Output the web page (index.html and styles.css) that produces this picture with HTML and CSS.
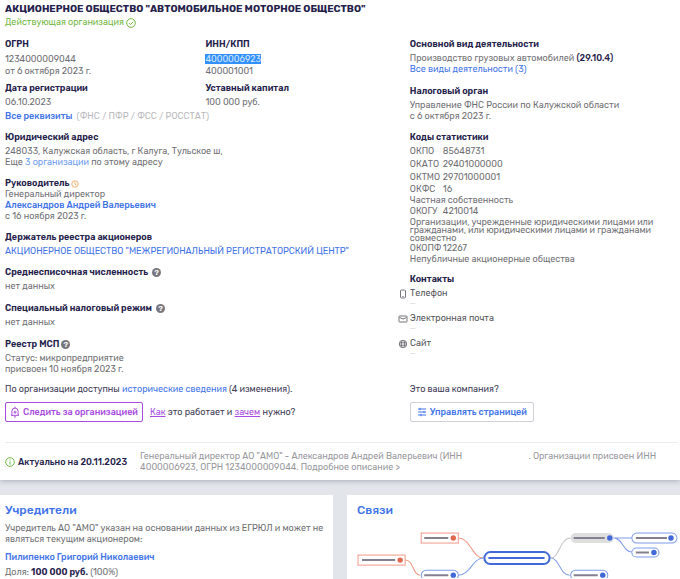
FILE: index.html
```html
<!DOCTYPE html>
<html lang="ru">
<head>
    <meta charset="UTF-8">
    <meta name="viewport" content="width=device-width, initial-scale=1.0">
    <title>АО "АМО"</title>
    <link rel="stylesheet" href="styles.css">
</head>
<body>
    <main class="company">
        <h1>АКЦИОНЕРНОЕ ОБЩЕСТВО "АВТОМОБИЛЬНОЕ МОТОРНОЕ ОБЩЕСТВО"</h1>
        <p class="status">Действующая организация
            <svg class="icon" viewBox="0 0 10 10"><circle cx="5" cy="5" r="4.3"/><path d="M3 5.1l1.5 1.5L7.2 3.7"/></svg>
        </p>

        <div class="columns">
            <div class="left">
                <div class="pair">
                    <section class="block">
                        <h2>ОГРН</h2>
                        <p>1234000009044</p>
                        <p>от 6 октября 2023 г.</p>
                    </section>
                    <section class="block">
                        <h2>ИНН/КПП</h2>
                        <p><mark>4000006923</mark></p>
                        <p>400001001</p>
                    </section>
                    <section>
                        <h2>Дата регистрации</h2>
                        <p>06.10.2023</p>
                    </section>
                    <section>
                        <h2>Уставный капитал</h2>
                        <p>100 000 руб.</p>
                    </section>
                </div>
                <p class="details"><a class="medium" href="#">Все реквизиты</a> <span class="muted">(ФНС / ПФР / ФСС / РОССТАТ)</span></p>

                <section class="block">
                    <h2>Юридический адрес</h2>
                    <p>248033, Калужская область, г Калуга, Тульское ш,</p>
                    <p>Еще <a class="light" href="#">3 организации</a> по этому адресу</p>
                </section>
                <section class="block tight">
                    <h2>Руководитель
                        <svg class="icon clock" viewBox="0 0 10 10"><circle cx="5" cy="5" r="4"/><path d="M5 2.5v2.7l1.8 1"/></svg>
                    </h2>
                    <p>Генеральный директор</p>
                    <p><a class="medium" href="#">Александров Андрей Валерьевич</a></p>
                    <p>с 16 ноября 2023 г.</p>
                </section>
                <section class="block">
                    <h2>Держатель реестра акционеров</h2>
                    <p><a href="#">АКЦИОНЕРНОЕ ОБЩЕСТВО "МЕЖРЕГИОНАЛЬНЫЙ РЕГИСТРАТОРСКИЙ ЦЕНТР"</a></p>
                </section>
                <section class="block wide">
                    <h2>Среднесписочная численность <span class="hint">?</span></h2>
                    <p>нет данных</p>
                </section>
                <section class="block wide">
                    <h2>Специальный налоговый режим <span class="hint">?</span></h2>
                    <p>нет данных</p>
                </section>
                <section>
                    <h2>Реестр МСП<span class="hint">?</span></h2>
                    <p>Статус: микропредприятие</p>
                    <p>присвоен 10 ноября 2023 г.</p>
                </section>
            </div>

            <div class="right">
                <section class="block wide">
                    <h2>Основной вид деятельности</h2>
                    <p>Производство грузовых автомобилей <b class="medium">(29.10.4)</b></p>
                    <p><a href="#">Все виды деятельности (3)</a></p>
                </section>
                <section class="block">
                    <h2>Налоговый орган</h2>
                    <p>Управление ФНС России по Калужской области</p>
                    <p>с 6 октября 2023 г.</p>
                </section>
                <section class="codes">
                    <h2>Коды статистики</h2>
                    <p class="code"><span>ОКПО</span>85648731</p>
                    <p class="code"><span>ОКАТО</span>29401000000</p>
                    <p class="code"><span>ОКТМО</span>29701000001</p>
                    <p><span>ОКФС</span>16</p>
                    <p>Частная собственность</p>
                    <p><span>ОКОГУ</span>4210014</p>
                    <p class="dense">Организации, учрежденные юридическими лицами или гражданами, или юридическими лицами и гражданами совместно</p>
                    <p><span>ОКОПФ</span>12267</p>
                    <p>Непубличные акционерные общества</p>
                </section>
                <section>
                    <h2>Контакты</h2>
                    <ul class="contacts">
                        <li>
                            <svg class="icon" viewBox="0 0 10 10"><rect x="2.5" y="1" width="5" height="8" rx="1"/><path d="M4.3 7.6h1.4"/></svg>
                            Телефон <span class="empty">—</span>
                        </li>
                        <li>
                            <svg class="icon" viewBox="0 0 10 10"><rect x="1" y="2" width="8" height="6" rx=".5"/><path d="M1.5 3.5L5 5l3.5-1.5"/></svg>
                            Электронная почта <span class="empty">—</span>
                        </li>
                        <li>
                            <svg class="icon" viewBox="0 0 10 10"><circle cx="5" cy="5" r="3.7"/><ellipse cx="5" cy="5" rx="1.7" ry="3.7"/><path d="M1.5 3.8h7M1.5 6.2h7"/></svg>
                            Сайт <span class="empty">—</span>
                        </li>
                    </ul>
                </section>
            </div>

            <div class="actions">
                <p>По организации доступны <a href="#">исторические сведения</a> (4 изменения).</p>
                <div class="buttons">
                    <button type="button" class="btn btn-follow">
                        <svg class="icon" viewBox="0 0 10 12"><path d="M1 9.3h8M1.9 9.3V5.2a3.1 3.1 0 0 1 6.2 0v4.1M5 2.1V.7M3.9 10.9h2.2M5 4.7v3M3.5 6.2h3"/></svg>
                        Следить за организацией
                    </button>
                    <span><a href="#">Как</a> это работает и <a href="#">зачем</a> нужно?</span>
                </div>
            </div>
            <div class="actions">
                <p>Это ваша компания?</p>
                <button type="button" class="btn btn-manage">
                    <svg class="icon" viewBox="0 0 10 10"><path d="M1 2h8M1 5h8M1 8h8M3 .8v2.4M7 3.8v2.4M4 6.8v2.4"/></svg>
                    Управлять страницей
                </button>
            </div>
        </div>

        <footer class="summary">
            <svg class="icon info" viewBox="0 0 10 10"><circle cx="5" cy="5" r="4.3"/><path d="M5 4.4v3.1M5 2.5v1"/></svg>
            <strong>Актуально на 20.11.2023</strong>
            <p>Генеральный директор АО "АМО" - Александров Андрей Валерьевич (ИНН <span class="blank"></span>. Организации присвоен ИНН 4000006923, ОГРН 1234000009044. Подробное описание &gt;</p>
        </footer>
    </main>

    <div class="cards">
        <section class="card">
            <h3>Учредители</h3>
            <p>Учредитель АО "АМО" указан на основании данных из ЕГРЮЛ и может не являться текущим акционером:</p>
            <p class="founder"><a class="medium" href="#">Пилипенко Григорий Николаевич</a></p>
            <p class="share">Доля: <b>100 000 руб.</b> (100%)</p>
        </section>
        <section class="card">
            <h3>Связи</h3>
            <svg class="graph" viewBox="0 0 322 51">
                <g class="line-red">
                    <path d="M101 11c12 0 14 20 25 20M48 33c9 0 7 15 15 15"/>
                    <rect x="64" y="6" width="37" height="10"/>
                    <rect x="1" y="28" width="47" height="10"/>
                </g>
                <g class="line-blue">
                    <path d="M101 48c12 0 14-17 25-17M193 31c9 0 9 17 19 17M255 11h19M256 11c9 0 9 14 18 14"/>
                    <rect x="64" y="43" width="37" height="10" rx="5"/>
                    <rect x="213" y="43" width="37" height="10" rx="5"/>
                    <rect x="274" y="6" width="45" height="10" rx="5"/>
                    <rect x="274" y="21" width="27" height="9" rx="4.5"/>
                </g>
                <path class="line-grey" d="M193 31c9 0 9-20 20-20"/>
                <rect class="pill-grey" x="213" y="6" width="43" height="10" rx="5"/>
                <rect class="pill-main" x="127" y="25" width="65" height="12" rx="6"/>
                <path class="text-main" d="M131 31h56"/>
                <path class="text-grey" d="M67 11h24M5 33h33M67 48h24M216 11h31M216 48h24M278 11h31M278 25.5h13"/>
                <g class="dot-red"><circle cx="96" cy="11" r="2.7"/><circle cx="43" cy="33" r="2.7"/></g>
                <g class="dot-blue"><circle cx="96" cy="48" r="2.7"/><circle cx="252" cy="11" r="2.7"/><circle cx="245" cy="48" r="2.7"/><circle cx="313" cy="11" r="2.7"/><circle cx="296" cy="25.5" r="2.7"/></g>
            </svg>
        </section>
    </div>
</body>
</html>
```
FILE: styles.css
```css
* {
    box-sizing: border-box;
}
body {
    margin: 0;
    min-height: 100vh;
    display: flex;
    flex-direction: column;
    font-family: Rubik, Roboto, sans-serif;
    font-size: 9px;
    line-height: 11px;
    color: #707074;
    background-color: #e2e5ea;
}
h1, h2, h3, p, ul {
    margin: 0;
    padding: 0;
}
h1 {
    font-size: 10px;
    line-height: 14px;
    font-weight: 700;
    color: #24214a;
}
h2 {
    font-size: 9px;
    line-height: 12px;
    font-weight: 600;
    color: #24214a;
    margin-bottom: 3px;
}
a {
    color: #4274e8;
    text-decoration: none;
}
a.light {
    color: #6d9bf0;
}
b {
    font-weight: 600;
    color: #24214a;
}
.medium {
    font-weight: 500;
}
mark {
    background-color: #3390ff;
    color: #d5e9ff;
}
.icon {
    width: 10px;
    height: 10px;
    fill: none;
    stroke: currentColor;
    stroke-width: 1;
    vertical-align: middle;
}
.company {
    padding: 2px 3px 7px 5px;
    background-color: #fff;
    box-shadow: 0 1px 5px rgba(60, 70, 90, 0.35);
}
.status {
    line-height: 13px;
    margin-bottom: 9px;
    color: #74b843;
}
.columns {
    display: grid;
    grid-template-columns: 3fr 2fr;
    column-gap: 4px;
}
.pair {
    display: grid;
    grid-template-columns: 1fr 1fr;
}
.block {
    margin-bottom: 9px;
}
.wide {
    margin-bottom: 10px;
}
.pair .block {
    line-height: 12px;
    margin-bottom: 5px;
}
.tight h2 {
    margin-bottom: 0;
}
.details {
    margin: 3px 0 9px;
}
.muted {
    color: #b9b9bd;
    margin-left: 2px;
}
.clock {
    width: 8px;
    height: 8px;
    color: #f0a050;
}
.hint {
    display: inline-block;
    width: 9px;
    height: 9px;
    margin-left: 2px;
    border-radius: 50%;
    background-color: #77777d;
    color: #fff;
    font-size: 8px;
    line-height: 9px;
    text-align: center;
}
.codes {
    margin-bottom: 8px;
}
.codes h2 {
    margin-bottom: 2px;
}
.codes span {
    display: inline-block;
    width: 33px;
}
.codes .code {
    line-height: 13px;
}
.codes .dense {
    line-height: 8px;
    margin: 1px 10px 1px 0;
}
.contacts {
    list-style: none;
    color: #55555a;
}
.contacts li {
    margin-bottom: 4px;
}
.contacts .icon {
    margin-left: -12px;
    color: #77777d;
}
.empty {
    display: block;
    font-size: 8px;
    line-height: 10px;
    color: #cfcfd3;
}
.actions {
    color: #3c3a55;
    margin-top: 9px;
}
.actions p {
    margin-bottom: 7px;
}
.buttons {
    display: flex;
    align-items: center;
    gap: 7px;
}
.buttons a {
    color: #a84be0;
    text-decoration: underline;
}
.btn {
    display: inline-flex;
    align-items: center;
    height: 20px;
    gap: 3px;
    border-radius: 2px;
    background-color: #fff;
    font: inherit;
    font-weight: 500;
    cursor: pointer;
}
.btn-follow {
    padding: 0 4px;
    border: 1px solid #a84be0;
    color: #a84be0;
}
.btn-follow .icon {
    height: 12px;
}
.btn-manage {
    padding: 0 6px;
    border: 1px solid #cfcfd6;
    color: #4274e8;
}
.summary {
    display: flex;
    align-items: center;
    margin-top: 20px;
    padding-top: 8px;
    border-top: 1px solid #ebebee;
    color: #98989d;
}
.summary strong {
    flex: none;
    margin: 0 13px 0 3px;
    font-weight: 500;
    color: #24214a;
}
.info {
    flex: none;
    color: #74b843;
}
.summary p {
    padding-right: 15px;
}
.blank {
    display: inline-block;
    width: 64px;
}
.cards {
    flex: 1;
    display: grid;
    grid-template-columns: 1fr 1fr;
    gap: 14px;
    margin-top: 15px;
}
.card {
    padding: 7px 5px 0;
    background-color: #fff;
}
.card + .card {
    padding: 7px 0 0 10px;
}
h3 {
    font-size: 12px;
    line-height: 16px;
    font-weight: 500;
    color: #4274e8;
    margin-bottom: 5px;
}
.founder {
    margin: 7px 0 4px;
}
.graph {
    display: block;
    width: 100%;
    margin-top: 9px;
    fill: none;
}
.line-red {
    stroke: #f19a88;
}
.line-blue {
    stroke: #7f9cec;
}
.line-red rect, .line-blue rect {
    fill: #fff;
}
.line-grey {
    stroke: #c2c2c6;
}
.pill-grey {
    fill: #dededf;
}
.pill-main {
    fill: #fff;
    stroke: #4169d8;
    stroke-width: 2;
}
.text-main {
    stroke: #4169d8;
    stroke-width: 2;
}
.text-grey {
    stroke: #85808f;
    stroke-width: 2;
}
.dot-red {
    fill: #e0694f;
}
.dot-blue {
    fill: #4169d8;
}
```
